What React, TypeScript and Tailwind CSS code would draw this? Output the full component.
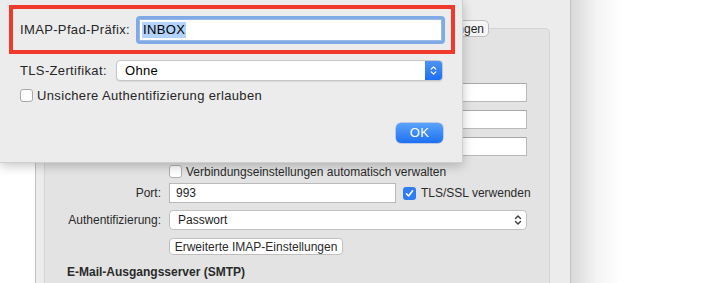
import React from "react";

function UpDown({ color, size = 12 }: { color: string; size?: number }) {
	return (
		<svg width={size} height={size + 2} viewBox="0 0 12 14" fill="none">
			<path d="M3.5 5.5 L6 3 L8.5 5.5" stroke={color} strokeWidth="1.4" strokeLinecap="round" strokeLinejoin="round" />
			<path d="M3.5 8.5 L6 11 L8.5 8.5" stroke={color} strokeWidth="1.4" strokeLinecap="round" strokeLinejoin="round" />
		</svg>
	);
}

function Field({ value = "" }: { value?: string }) {
	return (
		<div className="flex h-[19px] flex-1 items-center border border-[#b9b9b9] border-t-[#a8a8a8] bg-white pl-[5px] text-[12px] text-[#1e1e1e]">
			{value}
		</div>
	);
}

function Row({ label, children }: { label?: string; children: React.ReactNode }) {
	return (
		<div className="flex items-center">
			<div className="w-[94px] shrink-0 whitespace-nowrap text-right text-[12px] text-[#2a2a2a]">{label}</div>
			<div className="ml-[8px] flex flex-1 items-center">{children}</div>
		</div>
	);
}

export default function App() {
	return (
		<div className="relative h-[283px] w-[705px] overflow-hidden bg-white font-['Liberation_Sans',Arial,sans-serif] text-[#262626]">
			{/* Window behind the sheet */}
			<div className="flex h-full">
				<div className="w-[35px] shrink-0" />
				<div className="flex h-full w-[536px] shrink-0 flex-col border-l border-r border-[#c2c2c2] bg-[#ececec] pl-[8px] pr-[20px]">
					<div className="relative z-10 mt-[20px] flex h-[17px] justify-center">
						<div className="flex h-[17px] w-[384px] overflow-hidden rounded-[5px] border border-[#bdbdbd] bg-[#f6f6f6] text-[12px]">
							<div className="flex-1 border-r border-[#c8c8c8]" />
							<div className="flex flex-1 items-center justify-end pr-[4px] text-[#1e1e1e]">Servereinstellungen</div>
						</div>
					</div>
					<div className="-mt-[9px] flex flex-1 flex-col rounded-t-[5px] border border-b-0 border-[#d4d4d4] bg-[#e3e3e3] px-[22px]">
						<div className="mt-[22px] h-[16px]" />
						<div className="mt-[16px] flex flex-col gap-[8px]">
							<Row><Field /></Row>
							<Row><Field /></Row>
							<Row><Field /></Row>
						</div>
						<div className="ml-[102px] mt-[9px] flex h-[13px] items-center gap-[4px]">
							<div className="h-[13px] w-[13px] shrink-0 rounded-[3px] border border-[#b0b0b0] bg-white" />
							<span className="whitespace-nowrap text-[12px] text-[#2a2a2a]">Verbindungseinstellungen automatisch verwalten</span>
						</div>
						<div className="mt-[5px]">
							<Row label="Port:">
								<div className="flex h-[20px] w-[227px] shrink-0 items-center border border-[#b9b9b9] bg-white pl-[6px] text-[12px] text-[#1e1e1e]">993</div>
								<div className="ml-[7px] flex h-[13px] w-[13px] shrink-0 items-center justify-center rounded-[3px] bg-[#2f7df6]">
									<svg width="11" height="11" viewBox="0 0 11 11" fill="none">
										<path d="M2.5 5.8 L4.6 8 L8.6 2.8" stroke="white" strokeWidth="1.6" strokeLinecap="round" strokeLinejoin="round" />
									</svg>
								</div>
								<span className="ml-[5px] whitespace-nowrap text-[12px] text-[#2a2a2a]">TLS/SSL verwenden</span>
							</Row>
						</div>
						<div className="mt-[7px]">
							<Row label="Authentifizierung:">
								<div className="flex h-[20px] flex-1 items-center justify-between rounded-[4px] border border-[#c0c0c0] bg-white pl-[8px] pr-[2px] text-[12px] text-[#1e1e1e]">
									<span>Passwort</span>
									<UpDown color="#3a3a3a" />
								</div>
							</Row>
						</div>
						<div className="ml-[102px] mt-[8px] flex">
							<div className="flex h-[17px] w-[174px] items-center justify-center whitespace-nowrap rounded-[4px] border border-[#bfbfbf] bg-white text-[12px] text-[#2a2a2a]">
								Erweiterte IMAP-Einstellungen
							</div>
						</div>
						<div className="mt-[9px] flex h-[16px] items-center whitespace-nowrap text-[12px] font-bold text-[#2a2a2a]">E-Mail-Ausgangsserver (SMTP)</div>
					</div>
				</div>
				<div className="h-full w-[50px] shrink-0 bg-gradient-to-r from-[#d9d9d9] via-[#f3f3f3] to-white" />
			</div>

			{/* Sheet */}
			<div className="absolute left-0 top-0 z-20 flex h-[163px] w-[463px] flex-col border-r border-b border-[#cfcfcf] bg-[#ececec] tracking-[0.35px] shadow-[0_3px_10px_rgba(0,0,0,0.22)]">
				<div className="ml-[9px] mt-[5px] flex h-[49px] w-[446px] items-center border-[4px] border-[#f23a2b] pl-[7px]">
					<div className="w-[116px] shrink-0 whitespace-nowrap text-[13px]">IMAP-Pfad-Präfix:</div>
					<div className="h-[28px] w-[309px] rounded-[4px] bg-[#80a9e7] p-[3px]">
						<div className="flex h-full items-center border border-[#9bb9e6] bg-white pl-[2px] text-[13px] text-black">
							<span className="bg-[#b3d3fa] px-[1px] leading-[16px]">INBOX</span>
						</div>
					</div>
				</div>
				<div className="mt-[6px] flex h-[21px] items-center pl-[20px]">
					<div className="w-[96px] shrink-0 whitespace-nowrap text-[13px]">TLS-Zertifikat:</div>
					<div className="flex h-[21px] w-[327px] overflow-hidden rounded-[4px] border border-[#c6c6c6] bg-white shadow-[0_1px_1px_rgba(0,0,0,0.08)]">
						<div className="flex flex-1 items-center pl-[8px] text-[13px] text-black">Ohne</div>
						<div className="flex w-[17px] items-center justify-center bg-gradient-to-b from-[#4b93f8] to-[#1b6ff1]">
							<UpDown color="white" size={11} />
						</div>
					</div>
				</div>
				<div className="mt-[8px] flex h-[13px] items-center gap-[4px] pl-[20px]">
					<div className="h-[13px] w-[13px] shrink-0 rounded-[3px] border border-[#a9a9a9] bg-white" />
					<span className="whitespace-nowrap text-[13px]">Unsichere Authentifizierung erlauben</span>
				</div>
				<div className="mt-[21px] flex justify-end pr-[19px]">
					<div className="flex h-[20px] w-[47px] items-center justify-center rounded-[5px] bg-gradient-to-b from-[#5aa2fa] to-[#1c70f1] text-[13px] text-white shadow-[0_0_0_0.5px_rgba(0,60,200,0.4)]">
						OK
					</div>
				</div>
			</div>
		</div>
	);
}
